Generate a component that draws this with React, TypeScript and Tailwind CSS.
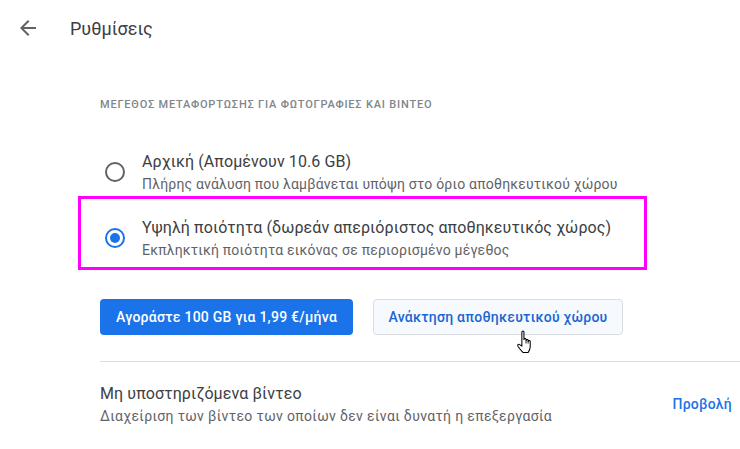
import React from "react";

function Radio({ checked }: { checked?: boolean }) {
  return (
    <div
      className={
        "flex h-5 w-5 shrink-0 items-center justify-center rounded-full border-2 " +
        (checked ? "border-[#1a73e8]" : "border-[#5f6368]")
      }
    >
      {checked && <div className="h-2.5 w-2.5 rounded-full bg-[#1a73e8]" />}
    </div>
  );
}

function Option({
  title,
  subtitle,
  checked,
}: {
  title: string;
  subtitle: string;
  checked?: boolean;
}) {
  return (
    <div className="flex items-center pl-[5px]">
      <Radio checked={checked} />
      <div className="ml-[17px]">
        <div className="text-[16px] leading-6 tracking-[0.1px] text-[#3c4043]">{title}</div>
        <div className="text-[14px] leading-5 tracking-[0.2px] text-[#5f6368]">{subtitle}</div>
      </div>
    </div>
  );
}

function HandCursor() {
  return (
    <svg width="18" height="24" viewBox="0 0 17 23" className="absolute left-[516px] top-[330px]">
      <path
        d="M5.5 2 C5.5 0.6 7.5 0.6 7.5 2 L7.5 9 C7.5 7.8 9.5 7.8 9.5 9 L9.5 10 C9.5 8.8 11.5 8.8 11.5 10 L11.5 11 C11.5 9.8 13.5 9.8 13.5 11 L13.5 16 C13.5 18.5 12.5 20 11.5 21.5 L6.5 21.5 C5.5 20.5 3.5 18 2 16 C0.8 14.3 2 12.8 3.5 14 L5.5 15.5 Z"
        fill="#fff"
        stroke="#000"
        strokeWidth="1"
        strokeLinejoin="round"
      />
      <path d="M9.5 10 L9.5 13 M11.5 11 L11.5 13" stroke="#000" strokeWidth="0.8" />
    </svg>
  );
}

export default function App() {
  return (
    <div className="relative h-[449px] w-[740px] overflow-hidden bg-white font-['Roboto','Noto_Sans',sans-serif]">
      {/* Header */}
      <div className="flex h-14 items-center pl-4">
        <svg width="24" height="24" viewBox="0 0 24 24" fill="#5f6368">
          <path d="M20 11H7.83l5.59-5.59L12 4l-8 8 8 8 1.41-1.41L7.83 13H20v-2z" />
        </svg>
        <div className="ml-[30px] text-[18px] text-[#3c4043]">Ρυθμίσεις</div>
      </div>

      <div className="pl-[100px]">
        <div className="mt-[41px] text-[11px] font-medium leading-4 tracking-[0.8px] text-[#80868b]">
          ΜΕΓΕΘΟΣ ΜΕΤΑΦΟΡΤΩΣΗΣ ΓΙΑ ΦΩΤΟΓΡΑΦΙΕΣ ΚΑΙ ΒΙΝΤΕΟ
        </div>

        <div className="mt-[37px] flex flex-col gap-[22px]">
          <Option
            title="Αρχική (Απομένουν 10.6 GB)"
            subtitle="Πλήρης ανάλυση που λαμβάνεται υπόψη στο όριο αποθηκευτικού χώρου"
          />
          <Option
            checked
            title="Υψηλή ποιότητα (δωρεάν απεριόριστος αποθηκευτικός χώρος)"
            subtitle="Εκπληκτική ποιότητα εικόνας σε περιορισμένο μέγεθος"
          />
        </div>

        <div className="mt-[39px] flex gap-5">
          <button className="h-[36px] w-[253px] rounded bg-[#1a73e8] text-[14px] font-medium tracking-[0.25px] text-white">
            Αγοράστε 100 GB για 1,99 €/μήνα
          </button>
          <button className="h-[36px] w-[250px] rounded border border-[#dadce0] bg-[#f6f9fe] text-[14px] font-medium tracking-[0.25px] text-[#1967d2]">
            Ανάκτηση αποθηκευτικού χώρου
          </button>
        </div>

        <div className="mt-[26px] border-t border-[#dadce0]" />

        <div className="flex items-center pb-6 pt-5">
          <div className="flex-1">
            <div className="text-[16px] leading-6 tracking-[0.1px] text-[#3c4043]">Μη υποστηριζόμενα βίντεο</div>
            <div className="text-[14px] leading-5 tracking-[0.35px] text-[#5f6368]">
              Διαχείριση των βίντεο των οποίων δεν είναι δυνατή η επεξεργασία
            </div>
          </div>
          <div className="pr-2 text-[14px] font-medium tracking-[0.25px] text-[#1a73e8]">Προβολή</div>
        </div>

        <div className="border-t border-[#dadce0]" />
      </div>

      {/* Highlight box */}
      <div className="pointer-events-none absolute left-[78px] top-[196px] h-[74px] w-[569px] border-[3px] border-[#ff00ff]" />

      <HandCursor />
    </div>
  );
}
